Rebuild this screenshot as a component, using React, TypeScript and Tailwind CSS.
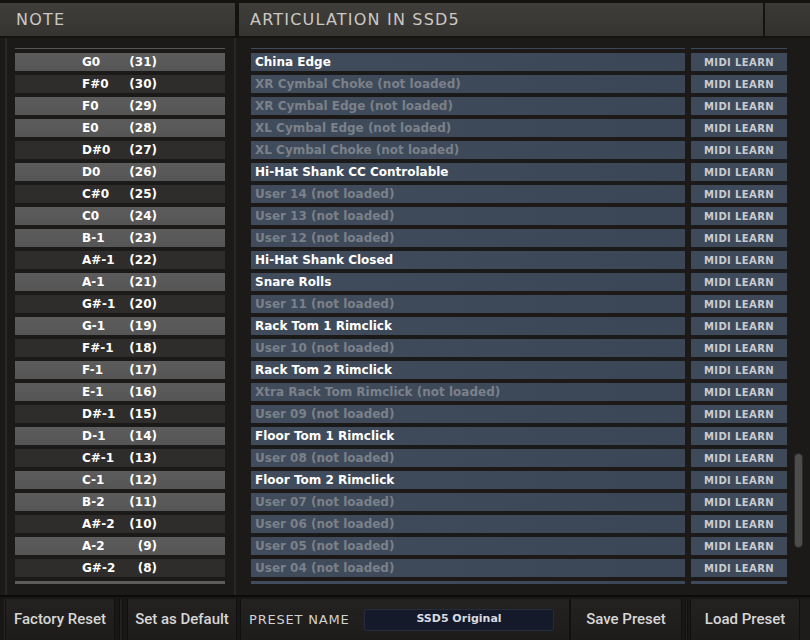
const rows: [string, number, string, boolean, boolean][] = [
  ["G0", 31, "China Edge", true, false],
  ["F#0", 30, "XR Cymbal Choke (not loaded)", false, true],
  ["F0", 29, "XR Cymbal Edge (not loaded)", false, false],
  ["E0", 28, "XL Cymbal Edge (not loaded)", false, false],
  ["D#0", 27, "XL Cymbal Choke (not loaded)", false, true],
  ["D0", 26, "Hi-Hat Shank CC Controlable", true, false],
  ["C#0", 25, "User 14 (not loaded)", false, true],
  ["C0", 24, "User 13 (not loaded)", false, false],
  ["B-1", 23, "User 12 (not loaded)", false, false],
  ["A#-1", 22, "Hi-Hat Shank Closed", true, true],
  ["A-1", 21, "Snare Rolls", true, false],
  ["G#-1", 20, "User 11 (not loaded)", false, true],
  ["G-1", 19, "Rack Tom 1 Rimclick", true, false],
  ["F#-1", 18, "User 10 (not loaded)", false, true],
  ["F-1", 17, "Rack Tom 2 Rimclick", true, false],
  ["E-1", 16, "Xtra Rack Tom Rimclick (not loaded)", false, false],
  ["D#-1", 15, "User 09 (not loaded)", false, true],
  ["D-1", 14, "Floor Tom 1 Rimclick", true, false],
  ["C#-1", 13, "User 08 (not loaded)", false, true],
  ["C-1", 12, "Floor Tom 2 Rimclick", true, false],
  ["B-2", 11, "User 07 (not loaded)", false, false],
  ["A#-2", 10, "User 06 (not loaded)", false, true],
  ["A-2", 9, "User 05 (not loaded)", false, false],
  ["G#-2", 8, "User 04 (not loaded)", false, true],
];

const font = { fontFamily: '"DejaVu Sans", sans-serif' };

const NoteRow = ({ name, num, sharp }: { name: string; num: number | string; sharp: boolean }) => (
  <div
    className={`h-[18px] w-[210px] flex items-center pl-[67px] text-[12px] font-bold text-white ${
      sharp ? "bg-[#2e2d2c]" : "bg-gradient-to-b from-[#5c5c5c] to-[#555555]"
    }`}
  >
    <span className="w-[46px]">{name}</span>
    <span className="w-[29px] text-right">{num === "" ? "" : `(${num})`}</span>
  </div>
);

const ArtRow = ({ label, loaded, midi = true }: { label: string; loaded: boolean; midi?: boolean }) => (
  <div className="h-[18px] flex gap-[6px]">
    <div
      className={`w-[434px] flex items-center pl-[4px] text-[12px] font-bold bg-gradient-to-r from-[#404c5c] to-[#3b4757] ${
        loaded ? "text-white" : "text-[#7b8089]"
      }`}
    >
      {label}
    </div>
    <div className="w-[96px] flex items-center justify-center text-[10px] font-bold tracking-[0.4px] text-[#c8ccd1] bg-[#3e4a5a]">
      {midi ? "MIDI LEARN" : ""}
    </div>
  </div>
);

const Button = ({ label, w }: { label: string; w: string }) => (
  <div
    className={`${w} h-full flex items-center justify-center border-x border-[#111010] bg-gradient-to-b from-[#242221] to-[#1d1c1b] text-[15px] font-medium text-[#d6d6d6]`}
    style={{ fontFamily: "Roboto, sans-serif" }}
  >
    {label}
  </div>
);

export default function App() {
  return (
    <div className="w-[810px] h-[640px] bg-[#1b1a18] flex flex-col overflow-hidden" style={font}>
      {/* header */}
      <div className="h-[38px] flex bg-[#141312] pt-[3px] pb-[2px]">
        <div className="w-[235px] flex items-center pl-[16px] bg-gradient-to-b from-[#403e3a] to-[#363430] text-[16px] tracking-[1.2px] text-[#cac8c4]">
          NOTE
        </div>
        <div className="w-[4px]" />
        <div className="w-[524px] flex items-center pl-[11px] bg-gradient-to-b from-[#403e3a] to-[#363430] text-[16px] tracking-[1.2px] text-[#cac8c4]">
          ARTICULATION IN SSD5
        </div>
        <div className="w-[2px]" />
        <div className="flex-1 bg-gradient-to-b from-[#3c3a36] to-[#33312e]" />
      </div>

      {/* body */}
      <div className="h-[557px] flex">
        <div className="w-[236px] flex pl-[5px] border-r-2 border-[#2a2826]">
          <div className="border-l-2 border-[#2a2826] pl-[8px] pt-[10px]">
            <div className="h-[536px] overflow-hidden">
              <div className="flex flex-col gap-[4px] -mt-[17px]">
                <NoteRow name="" num="" sharp={false} />
                {rows.map(([n, num, , , sharp]) => (
                  <NoteRow key={n} name={n} num={num} sharp={sharp} />
                ))}
                <NoteRow name="" num="" sharp={false} />
              </div>
            </div>
          </div>
        </div>
        <div className="flex-1 flex pl-[15px] pt-[10px]">
          <div className="h-[536px] overflow-hidden">
            <div className="flex flex-col gap-[4px] -mt-[17px]">
              <ArtRow label="" loaded={false} midi={false} />
              {rows.map(([n, , label, loaded]) => (
                <ArtRow key={n} label={label} loaded={loaded} />
              ))}
              <ArtRow label="" loaded={false} midi={false} />
            </div>
          </div>
          <div className="ml-[7px] w-[9px] pt-[405px]">
            <div className="h-[95px] w-[9px] rounded-full bg-[#4d4d4d] border border-[#2a2a2a]" />
          </div>
        </div>
      </div>

      {/* footer */}
      <div className="flex-1 flex border-t-2 border-[#0c0b0a] bg-[#181716] pt-[2px]">
        <div className="w-[5px] border-r border-[#2a2826]" />
        <Button label="Factory Reset" w="w-[110px]" />
        <div className="w-[12px] flex justify-center">
          <div className="w-[4px] h-full border-x border-[#111010] bg-[#222120]" />
        </div>
        <Button label="Set as Default" w="w-[110px]" />
        <div className="w-[3px]" />
        <div className="w-[330px] h-full flex items-center border-x border-[#111010] bg-gradient-to-b from-[#242221] to-[#1d1c1b]">
          <span className="pl-[8px] w-[123px] text-[13px] tracking-[0.8px] text-[#d2d2d2]">PRESET NAME</span>
          <div className="w-[190px] h-[22px] rounded-[3px] border border-[#262d3c] bg-[#141a2a] flex items-center justify-center text-[11px] font-bold text-[#d8dbe0]">
            SSD5 Original
          </div>
        </div>
        <Button label="Save Preset" w="w-[112px]" />
        <div className="w-[8px] flex justify-center">
          <div className="w-[3px] h-full border-x border-[#111010] bg-[#222120]" />
        </div>
        <Button label="Load Preset" w="w-[110px]" />
        <div className="flex-1 bg-[#1d1c1b]" />
      </div>
    </div>
  );
}
